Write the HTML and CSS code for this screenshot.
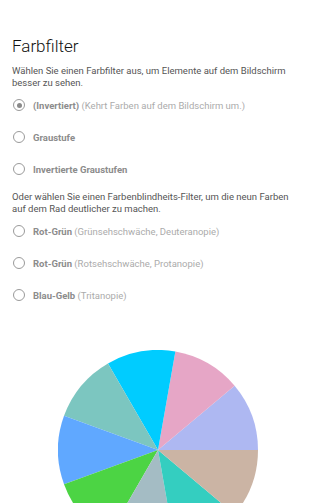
FILE: index.html
```html
<!DOCTYPE html>
<html lang="de">
<head>
<meta charset="utf-8">
<link rel="stylesheet" href="styles.css">
</head>
<body>
<div class="page">
  <h1 class="title">Farbfilter</h1>
  <p class="desc">Wählen Sie einen Farbfilter aus, um Elemente auf dem Bildschirm besser zu sehen.</p>
  <div class="group">
    <div class="row"><span class="radio checked"></span><span class="label"><b>(Invertiert)</b> (Kehrt Farben auf dem Bildschirm um.)</span></div>
    <div class="row"><span class="radio"></span><span class="label"><b>Graustufe</b></span></div>
    <div class="row"><span class="radio"></span><span class="label"><b>Invertierte Graustufen</b></span></div>
  </div>
  <p class="desc desc2">Oder wählen Sie einen Farbenblindheits-Filter, um die neun Farben auf dem Rad deutlicher zu machen.</p>
  <div class="group">
    <div class="row"><span class="radio"></span><span class="label"><b>Rot-Grün</b> (Grünsehschwäche, Deuteranopie)</span></div>
    <div class="row"><span class="radio"></span><span class="label"><b>Rot-Grün</b> (Rotsehschwäche, Protanopie)</span></div>
    <div class="row"><span class="radio"></span><span class="label"><b>Blau-Gelb</b> (Tritanopie)</span></div>
  </div>
  <div class="wheel">
    <svg width="200" height="200" viewBox="-100 -100 200 200">
      <path d="M0 0 L100 0 A100 100 0 0 0 76.60 -64.28 Z" fill="#AEB8F2"/>
      <path d="M0 0 L76.60 -64.28 A100 100 0 0 0 17.36 -98.48 Z" fill="#E6A6C6"/>
      <path d="M0 0 L17.36 -98.48 A100 100 0 0 0 -50 -86.60 Z" fill="#00CCFF"/>
      <path d="M0 0 L-50 -86.60 A100 100 0 0 0 -93.97 -34.20 Z" fill="#7CC6C0"/>
      <path d="M0 0 L-93.97 -34.20 A100 100 0 0 0 -93.97 34.20 Z" fill="#60A8FF"/>
      <path d="M0 0 L-93.97 34.20 A100 100 0 0 0 -50 86.60 Z" fill="#4CD444"/>
      <path d="M0 0 L-50 86.60 A100 100 0 0 0 17.36 98.48 Z" fill="#A4BCC4"/>
      <path d="M0 0 L17.36 98.48 A100 100 0 0 0 76.60 64.28 Z" fill="#34CEC0"/>
      <path d="M0 0 L76.60 64.28 A100 100 0 0 0 100 0 Z" fill="#CBB4A4"/>
    </svg>
  </div>
</div>
</body>
</html>
```

FILE: styles.css
```css
html, body {
  margin: 0;
  padding: 0;
  background: #fff;
}
body {
  font-family: "Roboto", "Noto Sans", sans-serif;
  width: 300px;
  height: 503px;
  overflow: hidden;
}
.page {
  padding: 35px 8px 0 12px;
}
.title {
  margin: 0;
  font-size: 17px;
  line-height: 22px;
  font-weight: 300;
  color: #111;
}
.desc {
  margin: 8px 0 0 0;
  font-size: 9.5px;
  line-height: 12px;
  color: #555;
}
.desc2 {
  margin-top: 6px;
}
.group {
  display: flex;
  flex-direction: column;
}
.row {
  height: 32px;
  display: flex;
  align-items: center;
  gap: 8px;
  padding-left: 1px;
}
.radio {
  width: 12px;
  height: 12px;
  border: 1.3px solid #9a9a9a;
  border-radius: 50%;
  box-sizing: border-box;
  display: flex;
  align-items: center;
  justify-content: center;
  flex: none;
}
.radio.checked::after {
  content: "";
  width: 5px;
  height: 5px;
  border-radius: 50%;
  background: #8a8a8a;
}
.label {
  font-size: 9.5px;
  color: #ababab;
  white-space: nowrap;
}
.label b {
  font-weight: 700;
  color: #8c8c8c;
}
.wheel {
  margin-top: 39px;
  margin-left: 46px;
  display: flex;
}
.wheel svg {
  display: block;
}
```
